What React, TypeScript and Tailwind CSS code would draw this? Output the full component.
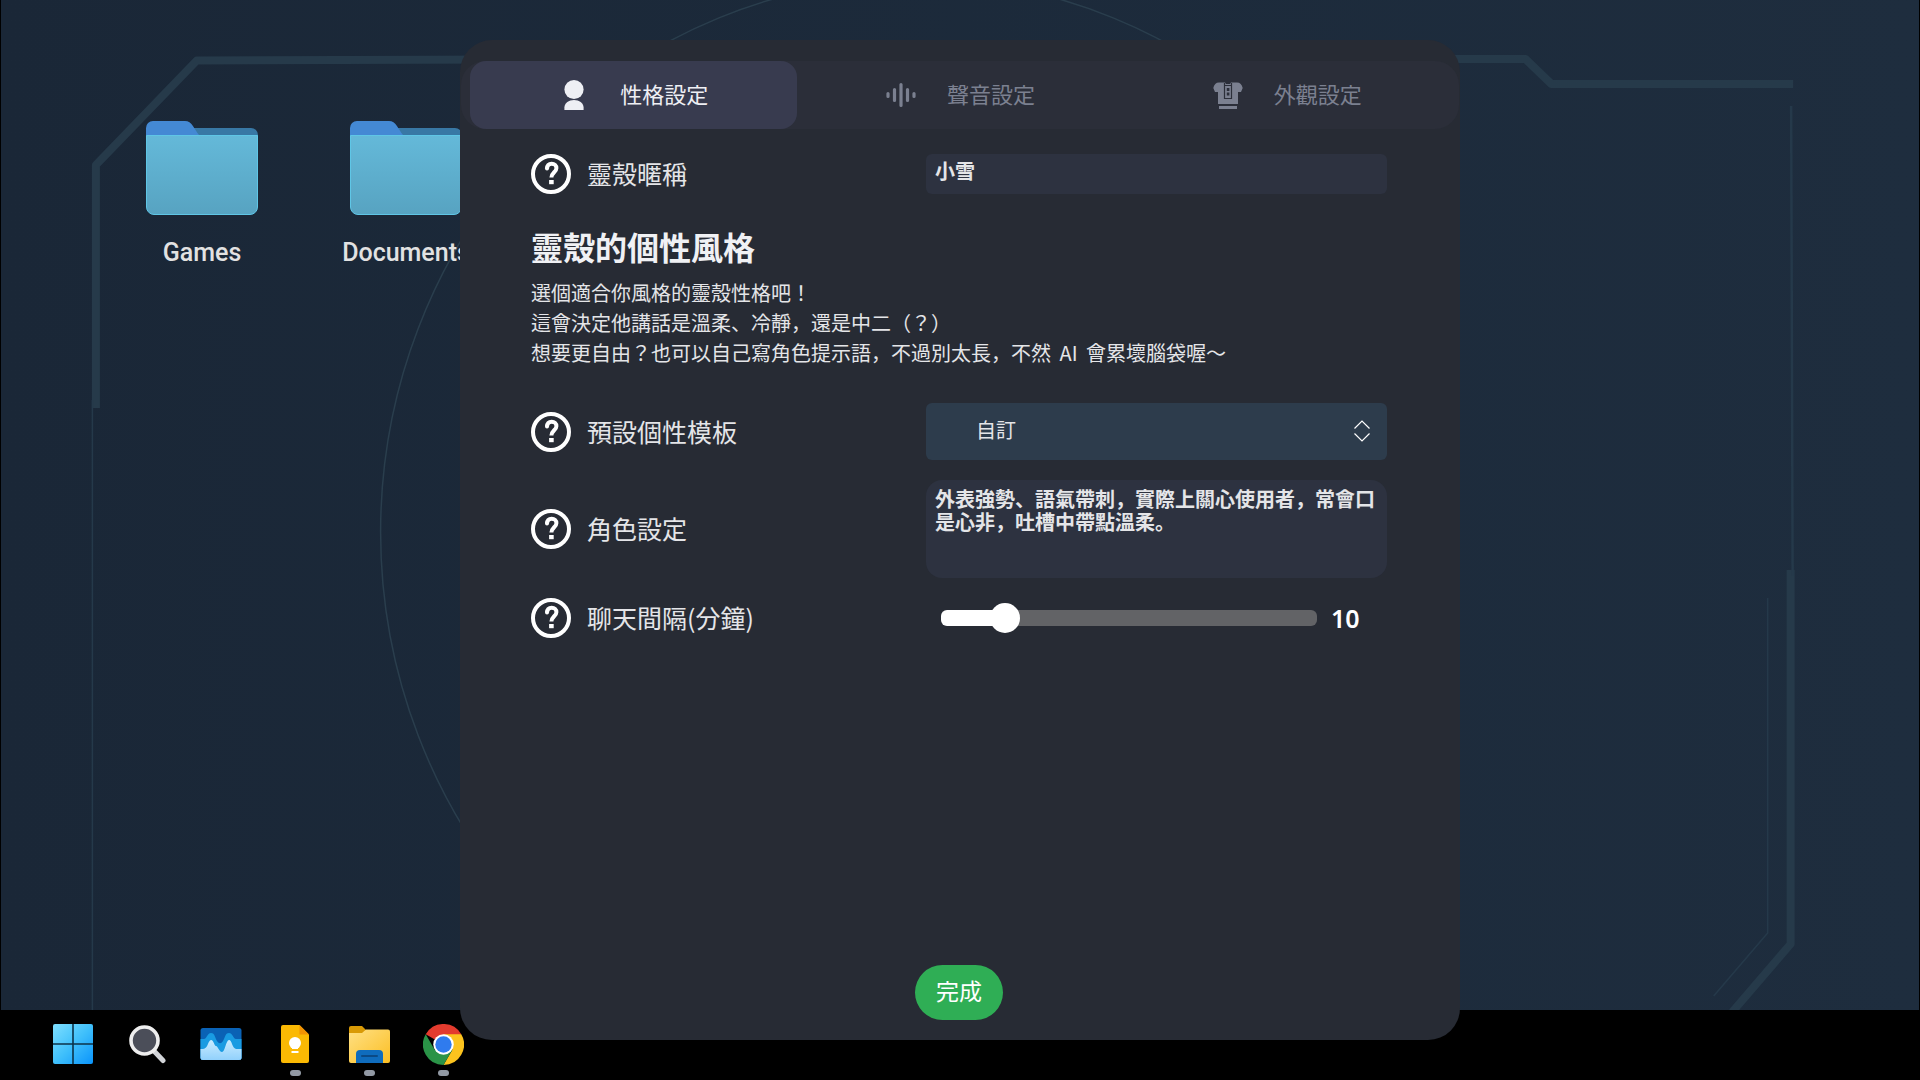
import { useState } from 'react'
import type { ReactNode } from 'react'

const CJK = "font-['Noto_Sans_CJK_JP',sans-serif]"

function QuestionIcon() {
  return (
    <svg viewBox="0 0 40 40" className="size-10 shrink-0" fill="none" aria-hidden="true">
      <circle cx="20" cy="20" r="18" stroke="#fff" strokeWidth="4" />
      <path d="M16 14.600c.2-3.200 2.100-4.800 4.700-4.800 2.800 0 4.700 1.700 4.700 4.400 0 3.900-5 4.400-5 9.400" stroke="#fff" strokeWidth="4" />
      <circle cx="16" cy="14.600" r="2" fill="#fff" />
      <rect x="18.100" y="26" width="4.600" height="4.200" fill="#fff" />
    </svg>
  )
}

function PersonIcon() {
  return (
    <svg viewBox="0 0 28 32" className="h-8 w-7" fill="currentColor" aria-hidden="true">
      <circle cx="14" cy="10.500" r="9.600" />
      <path d="M4.400 31v-2.500c0-4.500 4.500-7.500 9.600-7.500s9.600 3 9.600 7.500V31z" />
    </svg>
  )
}

function VoiceIcon() {
  return (
    <svg viewBox="0 0 28 32" className="h-8 w-7 overflow-visible" stroke="currentColor" strokeWidth="3.200" strokeLinecap="round" aria-hidden="true">
      <path d="M1 14.500v3M7.500 10.500v11M14 5.500v21M20.500 10.500v11M27 14.500v3" />
    </svg>
  )
}

function ShirtIcon() {
  return (
    <svg viewBox="0 0 28 32" className="h-8 w-7 overflow-visible" aria-hidden="true">
      <path d="M5 3.500h6l1 1.500h4l1-1.500h6c3 0 5 2 5.700 5.500L27 13h-3v12H4V13H1L-.700 9C0 5.500 2 3.500 5 3.500z" fill="currentColor" />
      <path d="M5 27h18v3H5z" fill="currentColor" />
      <path d="M10.500 4v15.500h7V4M10.500 6.500h7" stroke="#2c2f3a" strokeWidth="1.200" fill="none" />
      <path d="M12.800 9h2.600v3h-2.600zM12.800 13.500h2.600v3h-2.600z" fill="#2c2f3a" />
    </svg>
  )
}

const TABS = [
  { id: 'persona', label: '性格設定', icon: <PersonIcon /> },
  { id: 'voice', label: '聲音設定', icon: <VoiceIcon /> },
  { id: 'look', label: '外觀設定', icon: <ShirtIcon /> },
]

function Wallpaper() {
  return (
    <svg viewBox="0 0 1920 1010" preserveAspectRatio="none" className="absolute inset-0 size-full" fill="none" aria-hidden="true">
      <ellipse cx="916" cy="532" rx="536" ry="553" stroke="#2a3e4d" strokeWidth="1.500" />
      <g stroke="#263a4a" strokeWidth="8" strokeLinejoin="round">
        <path d="M95 408V165L196 60.500 700 59h826l26 25h242" />
        <path d="M1791.500 570v374L1733 1012" />
      </g>
      <g stroke="#25394a" strokeWidth="1.500">
        <path d="M91.500 400v610" />
        <path d="M1792 106l1.500 470" strokeWidth="2.500" />
        <path d="M1768.500 598v335l-54 63" />
      </g>
    </svg>
  )
}

function Folder({ name }: { name: string }) {
  return (
    <button type="button" className="flex w-[204px] flex-col items-center gap-[22px] text-[25px] leading-8 font-medium text-[#e2e2e2]">
      <svg viewBox="0 0 112 94" className="h-[94px] w-28" aria-hidden="true">
        <defs>
          <linearGradient id="folderFront" x1="0" y1="0" x2="0" y2="1">
            <stop offset="0" stopColor="#64b9d9" />
            <stop offset="1" stopColor="#57a3c1" />
          </linearGradient>
        </defs>
        <path d="M30 7h75a7 7 0 0 1 7 7v10H30z" fill="#3878a5" />
        <path d="M0 7a7 7 0 0 1 7-7h32c7 0 9 8 14 14v4H0z" fill="#4489d4" />
        <path d="M.500 14.500h111V86a7.500 7.500 0 0 1-7.500 7.500H8A7.500 7.500 0 0 1 .500 86z" fill="url(#folderFront)" stroke="#5fc6e6" />
      </svg>
      {name}
    </button>
  )
}

function WindowsIcon() {
  return (
    <svg viewBox="0 0 40 40" className="size-10" aria-hidden="true">
      <defs>
        <linearGradient id="win" x1="0" y1="0" x2="1" y2="1">
          <stop offset="0" stopColor="#7fe0ff" />
          <stop offset=".5" stopColor="#40c0fb" />
          <stop offset="1" stopColor="#0a94fb" />
        </linearGradient>
      </defs>
      <rect width="40" height="40" rx="2" fill="url(#win)" />
      <path d="M20 0v40M0 20h40" stroke="#0c3349" strokeWidth="1.600" />
    </svg>
  )
}

function SearchIcon() {
  return (
    <svg viewBox="0 0 40 40" className="size-10" aria-hidden="true">
      <path d="M27 27l9 9.500" stroke="#d2d4d8" strokeWidth="5" strokeLinecap="round" />
      <circle cx="17.500" cy="16.500" r="13.500" fill="#4b4e59" stroke="#eeeeee" strokeWidth="3.600" />
    </svg>
  )
}

function MonitorIcon() {
  return (
    <svg viewBox="0 0 42 40" className="h-10 w-[42px]" aria-hidden="true">
      <defs>
        <clipPath id="monitorClip">
          <rect x=".5" y="4" width="41" height="32" rx="2.500" />
        </clipPath>
        <linearGradient id="wave" x1="0" y1="0" x2="0" y2="1">
          <stop offset="0" stopColor="#c9ecff" />
          <stop offset="1" stopColor="#86cbfb" />
        </linearGradient>
      </defs>
      <g clipPath="url(#monitorClip)">
        <rect width="42" height="40" fill="#0a62b5" />
        <path d="M0 15h4c3 0 3-6 7-6s4 5 6 8 4 3 6 0 2-8 6-8 4 6 7 6h6v25H0z" fill="#199be2" />
        <path d="M0 25h3c5 0 5-9 8-9s3 6 5 6 3 6 6 6 4-12 7-12 3 8 7 9h6v15H0z" fill="url(#wave)" />
      </g>
    </svg>
  )
}

function KeepIcon() {
  return (
    <svg viewBox="0 0 28 40" className="h-10 w-7" aria-hidden="true">
      <path d="M2 1h16.500L28 10.500V37a2 2 0 0 1-2 2H2a2 2 0 0 1-2-2V3a2 2 0 0 1 2-2z" fill="#fbb903" />
      <path d="M18.500 1L28 10.500h-9.500z" fill="#f29203" />
      <circle cx="14" cy="19" r="6" fill="#fff" />
      <path d="M11 22h6v3h-6zM10.500 27h7v2h-7z" fill="#fff" />
    </svg>
  )
}

function ExplorerIcon() {
  return (
    <svg viewBox="0 0 42 40" className="h-10 w-[42px]" aria-hidden="true">
      <defs>
        <linearGradient id="explorer" x1="0" y1="0" x2="1" y2="1">
          <stop offset="0" stopColor="#ffe084" />
          <stop offset="1" stopColor="#fbbf24" />
        </linearGradient>
      </defs>
      <path d="M1 4a2 2 0 0 1 2-2h11l4 4v8H1z" fill="#d99a06" />
      <path d="M1 9h13l4-3.500h22a2 2 0 0 1 2 2V37a2 2 0 0 1-2 2H3a2 2 0 0 1-2-2z" fill="url(#explorer)" />
      <path d="M8 39V30a4 4 0 0 1 4-4h19a4 4 0 0 1 4 4v9z" fill="#0f6cbd" />
      <path d="M14 32h15" stroke="#0b4a86" strokeWidth="2" strokeLinecap="round" />
    </svg>
  )
}

function ChromeIcon() {
  return (
    <svg viewBox="0 0 48 48" className="size-[41px]" aria-hidden="true">
      <path d="M24 24L3.200 12A24 24 0 0 1 44.800 12z" fill="#e33b2e" />
      <path d="M24 12h20.800A24 24 0 0 1 24 48l10.400-18z" fill="#fcc31e" />
      <path d="M13.600 30L3.200 12A24 24 0 0 0 24 48l10.400-18z" fill="#2a9347" />
      <circle cx="24" cy="24" r="12" fill="#fff" />
      <circle cx="24" cy="24" r="9.600" fill="#2f7bee" />
    </svg>
  )
}

const TASKBAR = [
  { name: 'Start', icon: <WindowsIcon />, running: false },
  { name: 'Search', icon: <SearchIcon />, running: false },
  { name: 'Monitor', icon: <MonitorIcon />, running: false },
  { name: 'Keep', icon: <KeepIcon />, running: true },
  { name: 'Explorer', icon: <ExplorerIcon />, running: true },
  { name: 'Chrome', icon: <ChromeIcon />, running: true },
]

function Row({ id, label, children }: { id: string; label: string; children: ReactNode }) {
  return (
    <div className="grid grid-cols-[6fr_7fr] items-center">
      <div className="flex items-center gap-4">
        <QuestionIcon />
        <label htmlFor={id} className="pb-0.5 text-[25px] leading-8">
          {label}
        </label>
      </div>
      {children}
    </div>
  )
}

export default function App() {
  const [tab, setTab] = useState('persona')
  const [name, setName] = useState('小雪')
  const [preset, setPreset] = useState('custom')
  const [persona, setPersona] = useState('外表強勢、語氣帶刺，實際上關心使用者，常會口是心非，吐槽中帶點溫柔。')
  const [minutes, setMinutes] = useState(10)

  const min = 5
  const max = 40
  const filled = ((minutes - min) / (max - min)) * 92 + 4

  return (
    <div className="relative flex min-h-screen flex-col overflow-hidden bg-black">
      <main className="relative mx-px flex-1 bg-linear-to-r from-[#1a2737] to-[#1e2d3e]">
        <Wallpaper />
        <div className="relative flex px-[99px] pt-[121px] font-[Roboto,sans-serif]">
          <Folder name="Games" />
          <Folder name="Documents" />
        </div>
      </main>

      <nav className="flex h-[70px] bg-black pl-9">
        {TASKBAR.map((app) => (
          <button key={app.name} type="button" aria-label={app.name} className="flex w-[74px] flex-col items-center gap-1.5 pt-3.5">
            <span className="flex h-10 items-center">{app.icon}</span>
            {app.running && <span className="h-1.5 w-[11px] rounded-full bg-[#9299a4]" />}
          </button>
        ))}
      </nav>

      <div className={`absolute inset-0 flex justify-center p-10 text-[#e4e5e8] ${CJK}`}>
        <section className="flex w-full max-w-[1000px] flex-col overflow-hidden rounded-[32px] bg-[#272b34] pt-[21px] pb-5">
          <div role="tablist" className="mx-px grid grid-cols-3 rounded-3xl bg-[#2b2e39] px-[9px]">
            {TABS.map((t) => (
              <button
                key={t.id}
                type="button"
                role="tab"
                aria-selected={tab === t.id}
                onClick={() => setTab(t.id)}
                className={`flex h-[68px] items-center justify-center gap-8 rounded-2xl pl-0.5 text-[22px] ${
                  tab === t.id ? 'bg-[#383b4f] text-[#eeeff4]' : 'text-[#7b8090]'
                }`}
              >
                {t.icon}
                <span className="pb-1">{t.label}</span>
              </button>
            ))}
          </div>

          <div className="flex flex-1 flex-col pt-[25px] pr-[73px] pl-[71px]">
            <Row id="nickname" label="靈殼暱稱">
              <input
                id="nickname"
                value={name}
                onChange={(e) => setName(e.target.value)}
                className="h-10 w-full rounded-md bg-[#2d3240] px-[9px] pb-2 text-xl font-bold outline-none"
              />
            </Row>

            <h2 className="mt-8 text-[32px] leading-10 font-bold text-[#f0f1f4]">靈殼的個性風格</h2>
            <p className="mt-3 text-xl leading-[30px]">
              選個適合你風格的靈殼性格吧！
              <br />
              這會決定他講話是溫柔、冷靜，還是中二（？）
              <br />
              想要更自由？也可以自己寫角色提示語，不過別太長，不然 <span className="px-1">AI</span> 會累壞腦袋喔～
            </p>

            <div className="mt-[35px] flex flex-col gap-5">
              <Row id="preset" label="預設個性模板">
                <div className="relative">
                  <select
                    id="preset"
                    value={preset}
                    onChange={(e) => setPreset(e.target.value)}
                    className="block h-[57px] w-full appearance-none rounded-md bg-[#2d3c4c] pb-1 pl-[50px] text-xl outline-none"
                  >
                    <option value="custom">自訂</option>
                  </select>
                  <svg viewBox="0 0 16 22" className="pointer-events-none absolute top-[17px] right-[17px] h-[22px] w-4" fill="none" stroke="#fff" strokeWidth="1.200" aria-hidden="true">
                    <path d="M.500 8.500L8 1l7.500 7.500M.500 13.500L8 21l7.500-7.500" />
                  </svg>
                </div>
              </Row>

              <Row id="persona" label="角色設定">
                <textarea
                  id="persona"
                  value={persona}
                  onChange={(e) => setPersona(e.target.value)}
                  className="block h-[98px] w-full resize-none rounded-2xl bg-[#2d3240] px-[9px] pt-[7px] text-xl leading-[23px] font-bold outline-none"
                />
              </Row>

              <Row id="interval" label="聊天間隔(分鐘)">
                <div className="flex items-center gap-3.5 pl-[15px]">
                  <input
                    id="interval"
                    type="range"
                    min={min}
                    max={max}
                    value={minutes}
                    onChange={(e) => setMinutes(Number(e.target.value))}
                    className="h-4 min-w-0 flex-1 appearance-none rounded-md [&::-webkit-slider-thumb]:size-[30px] [&::-webkit-slider-thumb]:appearance-none [&::-webkit-slider-thumb]:rounded-full [&::-webkit-slider-thumb]:bg-white"
                    style={{ background: `linear-gradient(to right, #fff ${filled}%, #626366 ${filled}%)` }}
                  />
                  <output htmlFor="interval" className="w-14 font-['Noto_Sans',sans-serif] text-[25px] leading-8 font-semibold text-white">
                    {minutes}
                  </output>
                </div>
              </Row>
            </div>

            <button type="button" className="mt-auto h-[55px] w-[88px] self-center rounded-full bg-[#2fae55] pb-1 text-[23px] text-white">
              完成
            </button>
          </div>
        </section>
      </div>
    </div>
  )
}
